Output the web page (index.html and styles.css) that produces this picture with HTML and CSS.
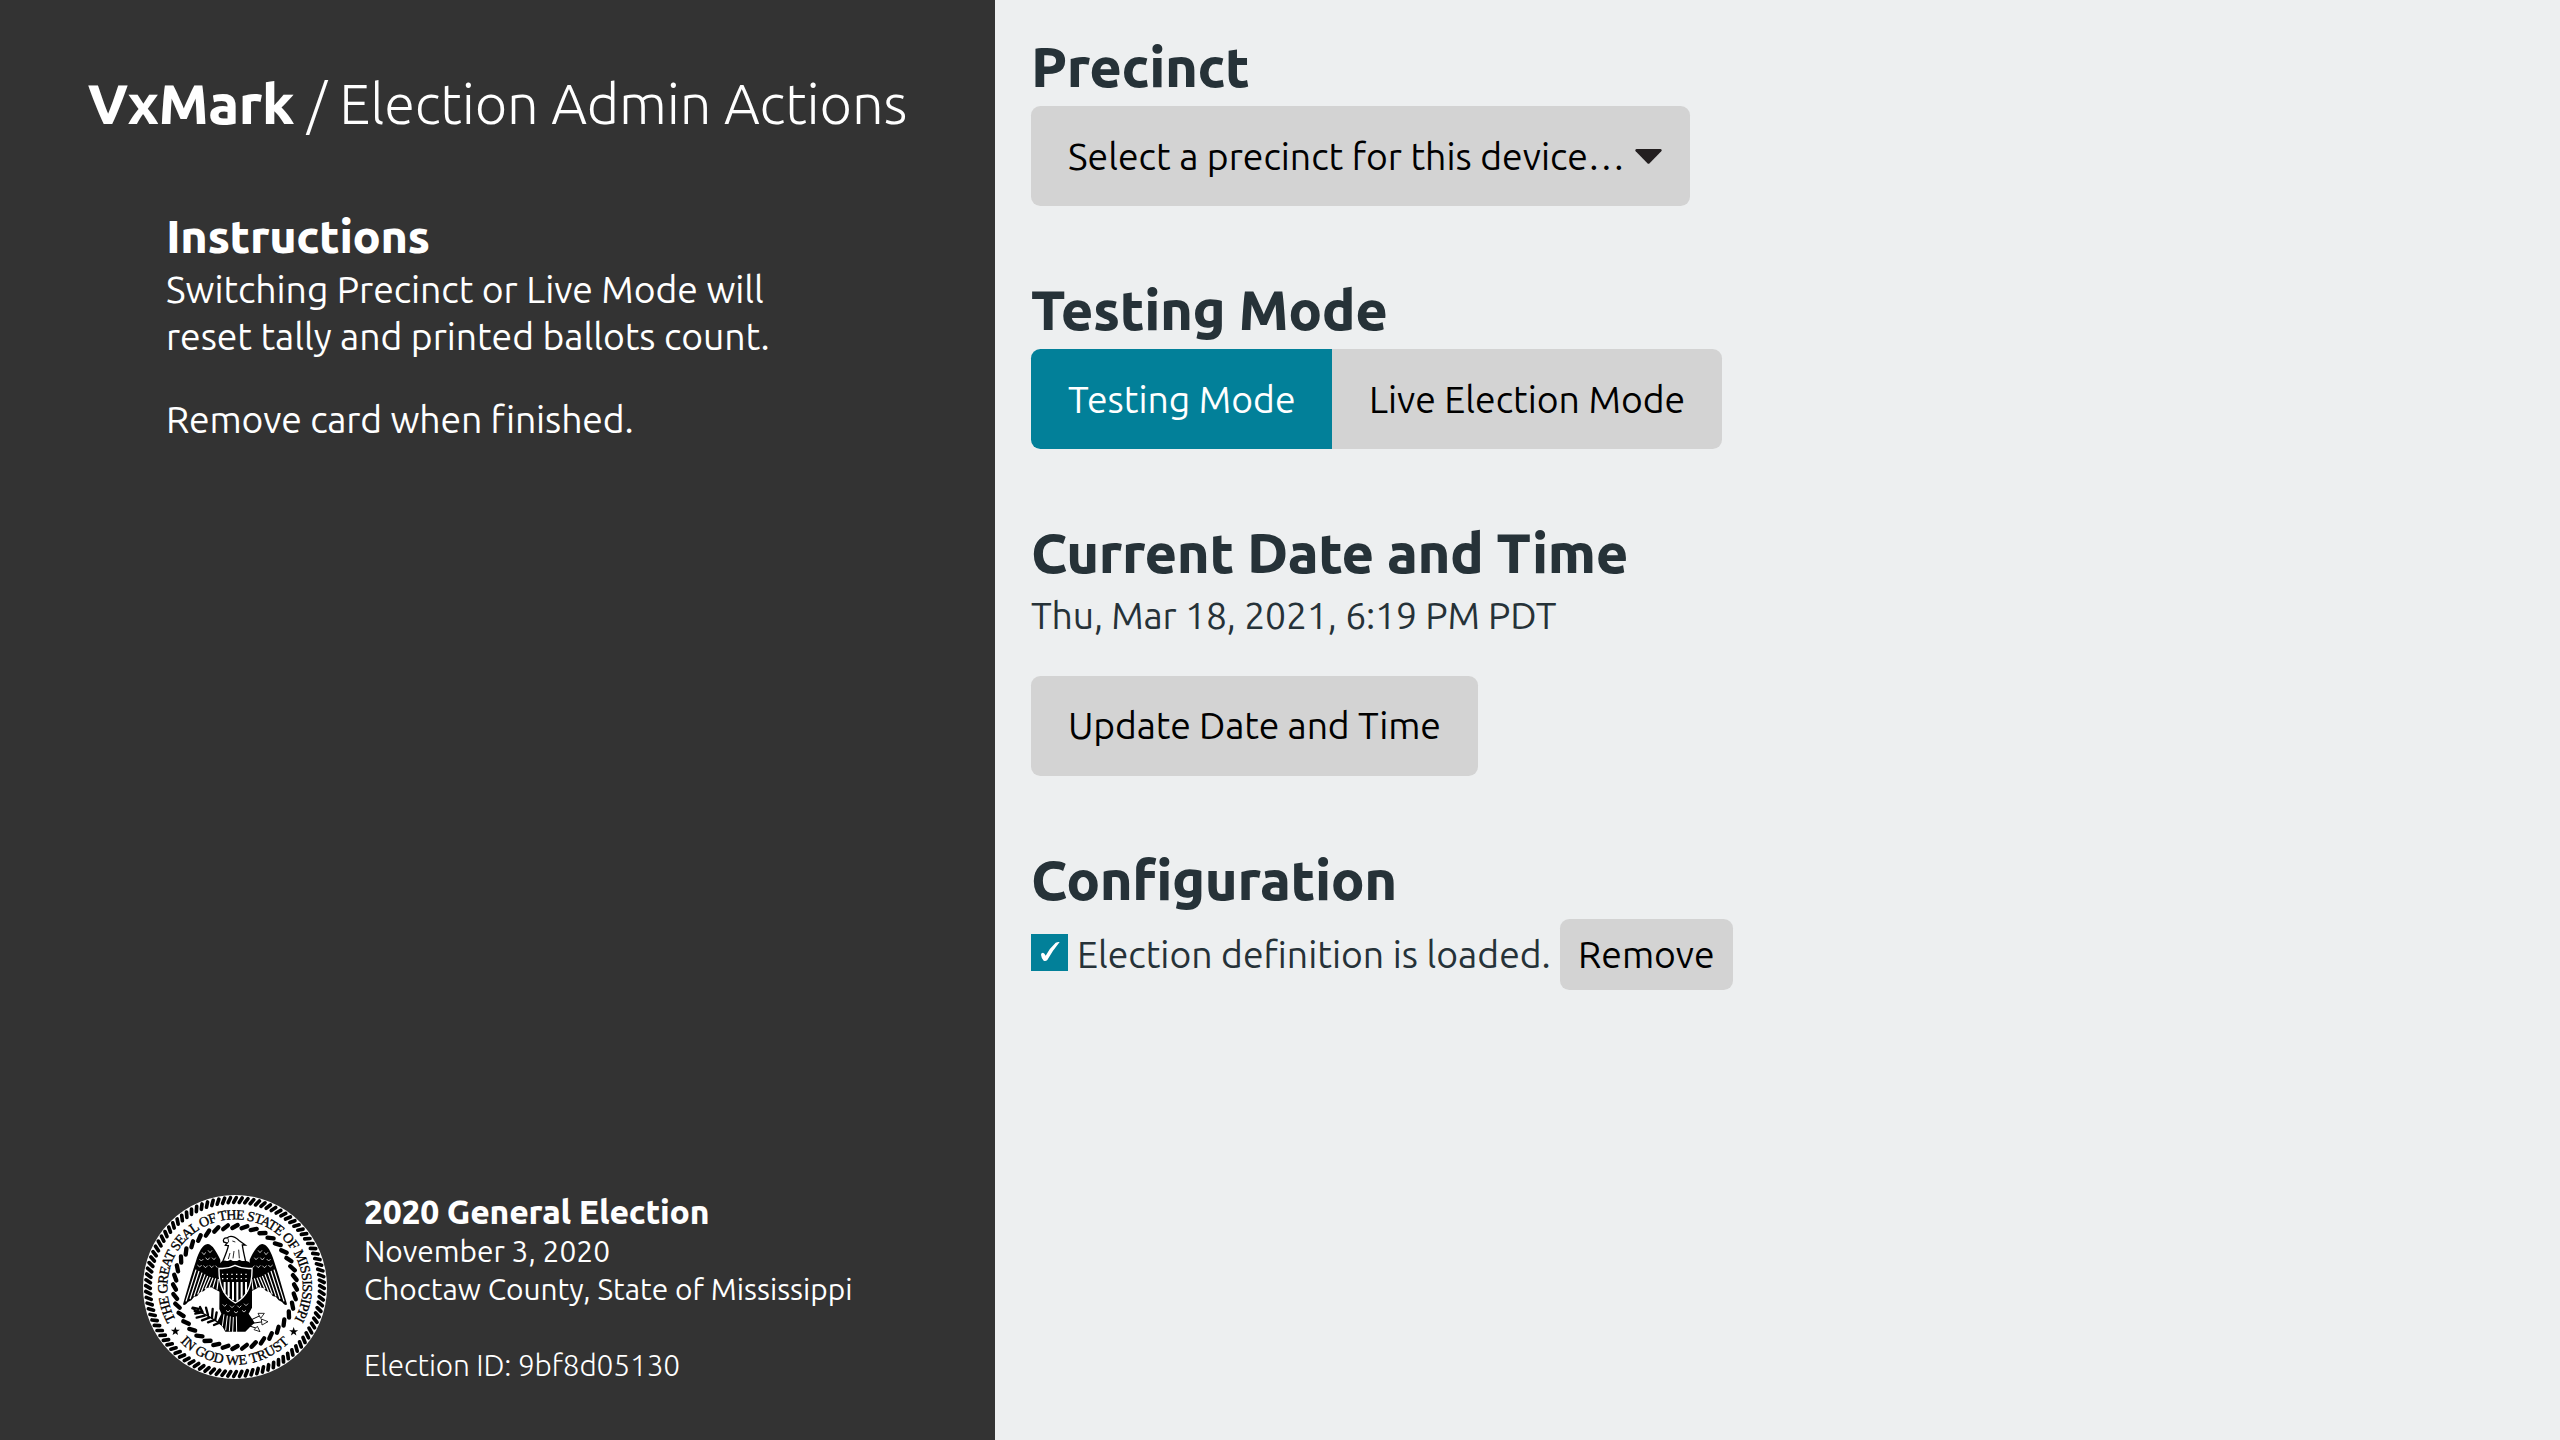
FILE: index.html
```
<!DOCTYPE html>
<html lang="en">
<head>
<meta charset="utf-8">
<title>VxMark</title>
<link rel="stylesheet" href="styles.css">
</head>
<body>
<div class="screen">
  <aside class="sidebar">
    <h1 class="app-title"><strong>VxMark</strong> <span>/ Election Admin Actions</span></h1>
    <div class="instructions">
      <h2>Instructions</h2>
      <p>Switching Precinct or Live Mode will<br>reset tally and printed ballots count.</p>
      <p>Remove card when finished.</p>
    </div>
    <footer class="election">
      <svg class="seal" viewBox="-276 -276 552 552" role="img" aria-label="State seal">
        <defs>
          <!-- Rope rings: one strand, repeated by rotation -->
          <path id="o1" d="M-4 -254L4 -268"/>
          <g id="o3"><use href="#o1"/><use href="#o1" transform="rotate(3.75)"/><use href="#o1" transform="rotate(7.5)"/></g>
          <g id="o6"><use href="#o3"/><use href="#o3" transform="rotate(11.25)"/></g>
          <g id="o12"><use href="#o6"/><use href="#o6" transform="rotate(22.5)"/></g>
          <g id="o24"><use href="#o12"/><use href="#o12" transform="rotate(45)"/></g>
          <g id="o48"><use href="#o24"/><use href="#o24" transform="rotate(90)"/></g>
          <path id="i1" d="M-8 -177L8 -186"/>
          <g id="i5"><use href="#i1"/><use href="#i1" transform="rotate(9)"/><use href="#i1" transform="rotate(18)"/><use href="#i1" transform="rotate(27)"/><use href="#i1" transform="rotate(36)"/></g>
          <g id="i10"><use href="#i5"/><use href="#i5" transform="rotate(45)"/></g>
          <g id="i20"><use href="#i10"/><use href="#i10" transform="rotate(90)"/></g>
          <path id="arc-top" d="M-177.5 98.4A203 203 0 1 1 177.5 98.4"/>
          <path id="arc-bottom" d="M-165 164.500A233 233 0 0 0 165 164.500"/>
          <path id="star" d="M0 -14L3.400 -4.500H13.500L5.400 1.500L8.300 11.300L0 5.500L-8.300 11.300L-5.400 1.500L-13.500 -4.500H-3.400Z"/>
          <g id="wing">
            <path d="M121 88C108 62 98 44 84 41C68 40 56 66 48 92C36 128 22 176 9 222C12 227 18 223 24 215L34 210L42 200L52 197L60 186L72 182L80 173L94 171L104 177L122 186Z" fill="#000"/>
            <path d="M48 118L18 213M57 122L30 206M66 127L42 198M75 132L53 192M83 137L64 184M91 140L75 177M99 142L87 172M107 144L99 172M115 146L111 178" stroke="#fff" stroke-width="3.600" fill="none"/>
            <path d="M66 66l6 7l5 -7M84 60l6 7l6 -7M58 86l6 6l6 -6M77 82l6 7l6 -7M96 82l6 6l5 -6M52 104l7 6l6 -6M70 106l7 6l6 -6M89 105l6 7l6 -6M107 106l5 6" stroke="#fff" stroke-width="2.200" fill="none"/>
          </g>
        </defs>
        <circle r="276" fill="#fff"/>
        <g stroke="#000" stroke-width="11" stroke-linecap="round"><use href="#o48"/><use href="#o48" transform="rotate(180)"/></g>
        <g stroke="#000" stroke-width="13" stroke-linecap="round"><use href="#i20"/><use href="#i20" transform="rotate(180)"/></g>
        <text class="seal-text"><textPath href="#arc-top" textLength="842">THE GREAT SEAL OF THE STATE OF MISSISSIPPI</textPath></text>
        <text class="seal-text"><textPath href="#arc-bottom" textLength="364">IN GOD WE TRUST</textPath></text>
        <use href="#star" transform="translate(-179 133)"/>
        <use href="#star" transform="translate(176 134)"/>
        <g transform="translate(-165 -170)">
          <use href="#wing"/>
          <use href="#wing" transform="matrix(-1 0 0 1 330 0)"/>
          <!-- head and neck -->
          <path d="M128 94C134 78 143 60 145 46L136 45L141 38L131 35C128 27 133 22 141 23C152 13 168 22 178 31L196 44L187 44C189 60 193 76 197 94Z" fill="#fff" stroke="#000" stroke-width="4"/>
          <path d="M144 24L146 35L141 38M157 32l9 3M150 68l-5 18M162 62l-3 22M176 58l2 26" stroke="#000" stroke-width="2.500" fill="none"/>
          <!-- body and tail -->
          <path d="M119 100Q128 86 142 93L152 88L165 96L178 88L190 94Q204 88 212 100L216 180L216 232L206 250L224 277L210 290L196 304H136L128 290L112 274L124 250L118 236Z" fill="#000"/>
          <path d="M132 252L127 288M142 256L137 300M151 258L148 303M160 260L158 305M169 258L170 305" stroke="#fff" stroke-width="3" fill="none"/>
          <path d="M128 222l6 6l6 -6M150 226l6 6l6 -6M172 226l6 6l6 -6M192 220l6 6l6 -6M138 240l6 5l6 -5M162 243l6 5l6 -5M186 240l6 5l6 -5" stroke="#fff" stroke-width="2.200" fill="none"/>
          <!-- shield -->
          <path d="M117 114Q142 117 165 105Q190 117 216 114Q218 190 166 218Q115 190 117 114Z" fill="#000" stroke="#fff" stroke-width="4"/>
          <path d="M134 155V188M146 155V200M159 155V210M172 155V211M185 155V202M198 155V190" stroke="#fff" stroke-width="6" fill="none"/>
          <path d="M126 132H210M126 145H210" stroke="#fff" stroke-width="4" stroke-dasharray="4 10" fill="none"/>
          <!-- olive branch -->
          <path d="M34 234Q70 246 124 282" stroke="#000" stroke-width="4" fill="none"/>
          <path d="M38 232l18 4M46 250l20 -4M50 262l24 -6M66 270l22 -8M60 230l8 16M78 232l6 22M98 236l-2 26M84 276l22 -8M102 284l18 -8M110 246l-4 22M44 242l20 3" stroke="#000" stroke-width="7" stroke-linecap="round" fill="none"/>
          <!-- arrows -->
          <path d="M206 272L240 256M210 280L250 274M206 286L236 296" stroke="#000" stroke-width="3" fill="none"/>
          <path d="M234 249L253 249L242 264ZM244 266L264 274L246 284ZM232 288L240 304L222 298Z" stroke="#000" stroke-width="2.500" fill="#fff"/>
        </g>
      </svg>
      <div class="election-info">
        <strong>2020 General Election</strong>
        <span>November 3, 2020</span>
        <span>Choctaw County, State of Mississippi</span>
        <span class="election-id">Election ID: 9bf8d05130</span>
      </div>
    </footer>
  </aside>
  <main class="main">
    <section>
      <h1>Precinct</h1>
      <button class="button select" type="button">Select a precinct for this device…
        <svg class="caret" viewBox="0 0 27 15" aria-hidden="true"><path d="M1.500 0H25.500Q27.500 .8 26.300 2.300L14.600 14.300Q13.500 15.300 12.400 14.300L.7 2.300Q-.5 .8 1.500 0Z"/></svg>
      </button>
    </section>
    <section>
      <h1>Testing Mode</h1>
      <div class="segmented"><button class="button active" type="button">Testing Mode</button><button class="button" type="button">Live Election Mode</button></div>
    </section>
    <section>
      <h1>Current Date and Time</h1>
      <p class="date">Thu, Mar 18, 2021, 6:19 PM PDT</p>
      <button class="button update" type="button">Update Date and Time</button>
    </section>
    <section>
      <h1>Configuration</h1>
      <div class="config-row">
        <svg class="check" viewBox="0 0 111 111" aria-hidden="true"><path d="M30 62Q30 56 36 56Q41 58 44 65Q56 42 74 26Q80 23 86 24Q66 48 49 78Q44 83 38 80Q31 73 30 62Z"/></svg>
        <span>Election definition is loaded.</span>
        <button class="button small" type="button">Remove</button>
      </div>
    </section>
  </main>
</div>
</body>
</html>
```
FILE: styles.css
```
* { box-sizing: border-box; }
body, h1, h2, p { margin: 0; }
body {
  font: 430 37.333px/1.25 Ubuntu, "Noto Sans", sans-serif;
  color: #263238;
  background: #edeff0;
}
h1, h2, strong { font-weight: 760; letter-spacing: -0.42px; }
h1 { font-size: 56px; line-height: 62px; }
h2 { font-size: 46.667px; line-height: 51px; }

.screen { display: flex; height: 1440px; }

.sidebar {
  display: flex;
  flex-direction: column;
  width: 995px;
  padding: 73px 0 56px;
  background: #333;
  color: #fff;
}
.app-title { text-align: center; }
.app-title span { font-weight: 300; letter-spacing: -0.15px; }
.instructions { padding: 76px 165px 0 166px; }
.instructions h2 { margin-bottom: 4px; }
.instructions p { letter-spacing: -0.04px; }
.instructions p + p { margin-top: 37px; letter-spacing: -0.13px; }

.election {
  display: flex;
  gap: 37px;
  margin-top: auto;
  padding-left: 143px;
}
.seal { width: 184px; height: 184px; margin-top: 1px; }
.seal-text {
  font: 42px "Liberation Serif", serif;
  fill: #000;
  stroke: #000;
  stroke-width: 1;
}
.election-info {
  display: flex;
  flex-direction: column;
  font-size: 29.867px;
  line-height: 38px;
}
.election-info strong {
  margin: -1px 0 1px;
  font-size: 33.6px;
  letter-spacing: -0.2px;
}
.election-id { margin-top: 38px; font-weight: 300; letter-spacing: -0.15px; }

.main {
  display: flex;
  flex: 1;
  flex-direction: column;
  align-items: flex-start;
  gap: 73px;
  padding: 36px;
}
.main h1 { margin-bottom: 8px; }
.date { margin-bottom: 37px; letter-spacing: -0.16px; }

.button {
  display: block;
  height: 100px;
  padding: 0 37px;
  border: 0;
  border-radius: 9.333px;
  background: #d3d3d3;
  color: #000;
  font: inherit;
  white-space: nowrap;
}
.update { letter-spacing: -0.15px; }
.select { display: flex; align-items: center; gap: 10px; padding-right: 28px; }
.caret { width: 27px; height: 15px; fill: #231f20; }
.segmented { display: flex; letter-spacing: -0.05px; }
.segmented .button { padding-right: 36.5px; }
.segmented .button:first-child { border-radius: 9.333px 0 0 9.333px; }
.segmented .button:last-child { border-radius: 0 9.333px 9.333px 0; }
.segmented .active { background: #028099; color: #fff; }

.config-row { display: flex; align-items: center; gap: 9px; height: 71px; }
.check { width: 37px; height: 37px; margin-bottom: 4px; background: #028099; fill: #fff; }
.small { height: 71px; padding: 0 18.333px; }
```
